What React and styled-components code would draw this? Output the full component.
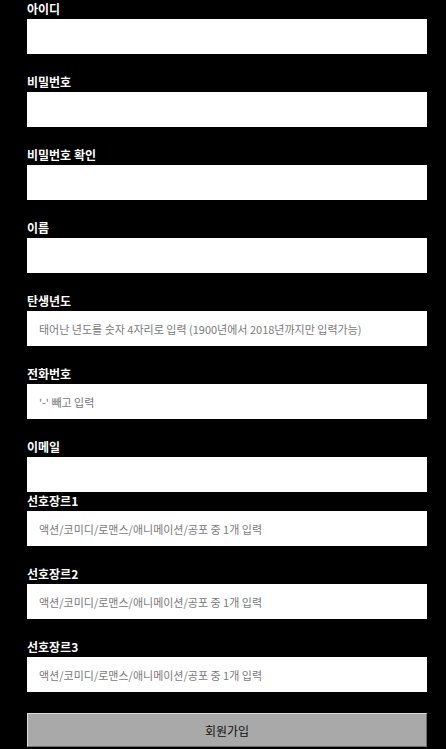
import React from "react";
import styled, { createGlobalStyle } from "styled-components";

const Global = createGlobalStyle`
  html, body { margin: 0; padding: 0; background: #000; }
  body { font-family: "Noto Sans CJK KR", "Noto Sans", sans-serif; }
`;

const Form = styled.form`
  width: 400px;
  padding: 0 0 0 27px;
  display: flex;
  flex-direction: column;
`;

const Field = styled.div`
  display: flex;
  flex-direction: column;
  margin-bottom: ${(p) => (p.$tight ? 0 : 19)}px;
`;

const Label = styled.label`
  display: block;
  height: 19px;
  box-sizing: border-box;
  padding-top: 1px;
  color: #fff;
  font-size: 12px;
  font-weight: 700;
  line-height: 15px;
`;

const Input = styled.input`
  box-sizing: border-box;
  width: 400px;
  height: 35px;
  border: none;
  outline: none;
  background: #fff;
  padding: 0 12px;
  font-family: "Noto Sans CJK KR", "Noto Sans", sans-serif;
  font-size: 11px;
  color: #222;
  &::placeholder { color: #7a7a7a; }
`;

const Submit = styled.button`
  box-sizing: border-box;
  margin-top: 2px;
  width: 400px;
  height: 34px;
  background: #a9a9a9;
  border: 1px solid;
  border-color: #dcdcdc #6e6e6e #6e6e6e #dcdcdc;
  font-family: "Noto Sans CJK KR", "Noto Sans", sans-serif;
  font-size: 12px;
  color: #111;
  padding: 0;
`;

const fields = [
  { label: "아이디", type: "text" },
  { label: "비밀번호", type: "password" },
  { label: "비밀번호 확인", type: "password" },
  { label: "이름", type: "text" },
  { label: "탄생년도", type: "text", ph: "태어난 년도를 숫자 4자리로 입력 (1900년에서 2018년까지만 입력가능)" },
  { label: "전화번호", type: "text", ph: "'-' 빼고 입력" },
  { label: "이메일", type: "text", tight: true },
  { label: "선호장르1", type: "text", ph: "액션/코미디/로맨스/애니메이션/공포 중 1개 입력" },
  { label: "선호장르2", type: "text", ph: "액션/코미디/로맨스/애니메이션/공포 중 1개 입력" },
  { label: "선호장르3", type: "text", ph: "액션/코미디/로맨스/애니메이션/공포 중 1개 입력" },
];

export default function App() {
  return (
    <>
      <Global />
      <Form onSubmit={(e) => e.preventDefault()}>
        {fields.map((f, i) => (
          <Field key={i} $tight={f.tight}>
            <Label htmlFor={`f${i}`}>{f.label}</Label>
            <Input id={`f${i}`} type={f.type} placeholder={f.ph || ""} />
          </Field>
        ))}
        <Submit type="submit">회원가입</Submit>
      </Form>
    </>
  );
}
